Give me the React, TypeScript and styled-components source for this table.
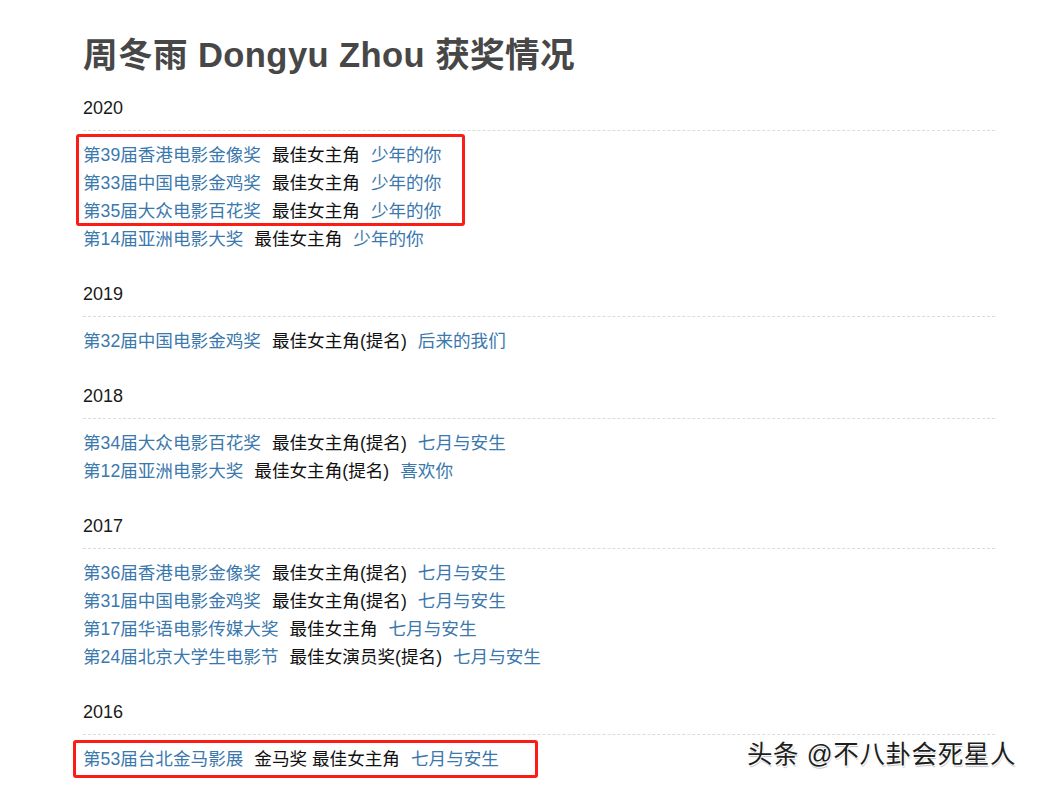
import styled, { createGlobalStyle } from 'styled-components'

const GlobalStyle = createGlobalStyle`
  body {
    margin: 0;
    background: #fff;
    font-family: "Liberation Sans", Arial, "Noto Sans CJK SC", sans-serif;
  }
`

type Award = {
  name: string
  category: string
  film: string
}

type Year = {
  year: string
  awards: Award[]
  // how many of the first rows are circled in red
  marked?: number
  mark?: { top: number; right: number; bottom: number; left: number }
}

const years: Year[] = [
  {
    year: '2020',
    marked: 3,
    mark: { top: -7, right: -24, bottom: -1, left: -7 },
    awards: [
      { name: '第39届香港电影金像奖', category: '最佳女主角', film: '少年的你' },
      { name: '第33届中国电影金鸡奖', category: '最佳女主角', film: '少年的你' },
      { name: '第35届大众电影百花奖', category: '最佳女主角', film: '少年的你' },
      { name: '第14届亚洲电影大奖', category: '最佳女主角', film: '少年的你' },
    ],
  },
  {
    year: '2019',
    awards: [{ name: '第32届中国电影金鸡奖', category: '最佳女主角(提名)', film: '后来的我们' }],
  },
  {
    year: '2018',
    awards: [
      { name: '第34届大众电影百花奖', category: '最佳女主角(提名)', film: '七月与安生' },
      { name: '第12届亚洲电影大奖', category: '最佳女主角(提名)', film: '喜欢你' },
    ],
  },
  {
    year: '2017',
    awards: [
      { name: '第36届香港电影金像奖', category: '最佳女主角(提名)', film: '七月与安生' },
      { name: '第31届中国电影金鸡奖', category: '最佳女主角(提名)', film: '七月与安生' },
      { name: '第17届华语电影传媒大奖', category: '最佳女主角', film: '七月与安生' },
      { name: '第24届北京大学生电影节', category: '最佳女演员奖(提名)', film: '七月与安生' },
    ],
  },
  {
    year: '2016',
    marked: 1,
    mark: { top: -5, right: -39, bottom: -5, left: -10 },
    awards: [{ name: '第53届台北金马影展', category: '金马奖 最佳女主角', film: '七月与安生' }],
  },
]

const Page = styled.div`
  position: relative;
  width: 1039px;
  min-height: 788px;
  padding: 35px 0 0 83px;
  box-sizing: border-box;
  overflow: hidden;
`

const Title = styled.h1`
  margin: 0 0 19px;
  font-size: 34.6px;
  line-height: 40px;
  font-weight: bold;
  color: #474747;
  letter-spacing: 0.4px;
`

const Section = styled.section`
  width: 912px;
  margin-bottom: 27px;
`

const YearHead = styled.h3`
  margin: 0;
  padding-bottom: 8px;
  font-size: 18px;
  line-height: 28px;
  font-weight: normal;
  color: #1a1a1a;
  border-bottom: 1px dashed #dcdcdc;
`

const List = styled.div`
  margin-top: 10px;
  display: flex;
  flex-direction: column;
  align-items: flex-start;
`

const Marked = styled.div<{ $t: number; $r: number; $b: number; $l: number }>`
  position: relative;
  display: flex;
  flex-direction: column;

  &::after {
    content: '';
    position: absolute;
    top: ${(p) => p.$t}px;
    right: ${(p) => p.$r}px;
    bottom: ${(p) => p.$b}px;
    left: ${(p) => p.$l}px;
    border: 3px solid #fb1c16;
    border-radius: 3px;
    pointer-events: none;
  }
`

const Row = styled.div`
  display: flex;
  gap: 11px;
  font-size: 17.6px;
  line-height: 28px;
  white-space: pre;
`

const Link = styled.a`
  color: #3a78ad;
  text-decoration: none;
`

const Plain = styled.span`
  color: #111;
`

const Watermark = styled.div`
  position: absolute;
  right: 23px;
  bottom: 30px;
  font-size: 25.5px;
  color: #1e1e1e;
  letter-spacing: 0.6px;
  text-shadow: 1px 1px 0 #fff, -1px 0 0 rgba(255, 255, 255, 0.8), 1px 2px 1px rgba(0, 0, 0, 0.25);
`

function AwardRow({ award }: { award: Award }) {
  return (
    <Row>
      <Link href="#">{award.name}</Link>
      <Plain>{award.category}</Plain>
      <Link href="#">{award.film}</Link>
    </Row>
  )
}

export default function App() {
  return (
    <>
      <GlobalStyle />
      <Page>
        <Title>周冬雨 Dongyu Zhou 获奖情况</Title>
        {years.map((y) => {
          const n = y.marked ?? 0
          const m = y.mark
          const rest = y.awards.slice(n)
          return (
            <Section key={y.year}>
              <YearHead>{y.year}</YearHead>
              <List>
                {n > 0 && m ? (
                  <Marked $t={m.top} $r={m.right} $b={m.bottom} $l={m.left}>
                    {y.awards.slice(0, n).map((a) => (
                      <AwardRow key={a.name} award={a} />
                    ))}
                  </Marked>
                ) : null}
                {rest.map((a) => (
                  <AwardRow key={a.name} award={a} />
                ))}
              </List>
            </Section>
          )
        })}
        <Watermark>头条 @不八卦会死星人</Watermark>
      </Page>
    </>
  )
}
